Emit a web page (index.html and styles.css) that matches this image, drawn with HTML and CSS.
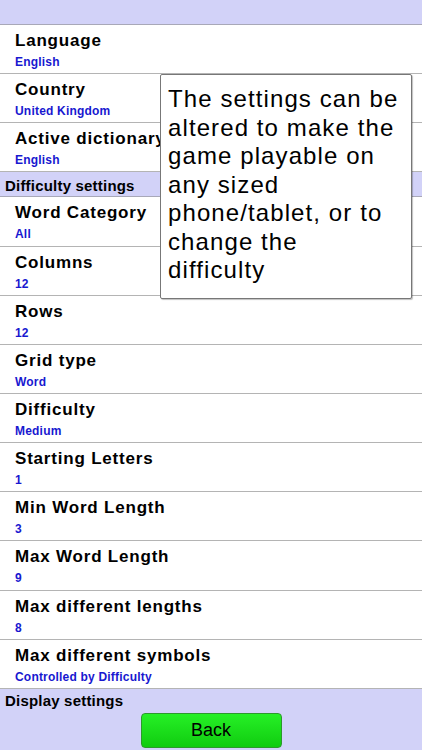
FILE: index.html
```html
<!DOCTYPE html>
<html lang="en">
    <head>
        <meta charset="UTF-8">
        <meta name="viewport" content="width=device-width, initial-scale=1.0">
        <title>Settings</title>
        <link rel="stylesheet" href="styles.css">
    </head>
    <body>
        <div class="screen">
            <div class="top-bar"></div>

            <div class="row"><div class="title">Language</div><div class="value">English</div></div>
            <div class="row"><div class="title">Country</div><div class="value">United Kingdom</div></div>
            <div class="row"><div class="title">Active dictionary</div><div class="value">English</div></div>

            <div class="section">Difficulty settings</div>

            <div class="row"><div class="title">Word Category</div><div class="value">All</div></div>
            <div class="row"><div class="title">Columns</div><div class="value">12</div></div>
            <div class="row"><div class="title">Rows</div><div class="value">12</div></div>
            <div class="row"><div class="title">Grid type</div><div class="value">Word</div></div>
            <div class="row"><div class="title">Difficulty</div><div class="value">Medium</div></div>
            <div class="row"><div class="title">Starting Letters</div><div class="value">1</div></div>
            <div class="row"><div class="title">Min Word Length</div><div class="value">3</div></div>
            <div class="row"><div class="title">Max Word Length</div><div class="value">9</div></div>
            <div class="row"><div class="title">Max different lengths</div><div class="value">8</div></div>
            <div class="row"><div class="title">Max different symbols</div><div class="value">Controlled by Difficulty</div></div>

            <div class="footer">
                <div class="footer-label">Display settings</div>
                <button class="back-btn">Back</button>
            </div>

            <div class="tip">
                The settings can be<br>
                altered to make the<br>
                game playable on<br>
                any sized<br>
                phone/tablet, or to<br>
                change the<br>
                difficulty
            </div>
        </div>
    </body>
</html>
```

FILE: styles.css
```css
body {
    margin: 0;
    font-family: "Liberation Sans", Arial, sans-serif;
    background-color: #fff;
}
.screen {
    position: relative;
    width: 422px;
    height: 750px;
    overflow: hidden;
}
.top-bar {
    height: 24px;
    background-color: #d2d2f8;
    border-bottom: 1px solid #a8a8b8;
}
.row {
    padding: 6px 0 0 15px;
    box-sizing: border-box;
    height: 49.15px;
    border-bottom: 1px solid #b4b4b4;
}
.title {
    font-size: 17px;
    font-weight: bold;
    line-height: 20px;
    letter-spacing: 0.8px;
    color: #000;
}
.value {
    margin-top: 4px;
    font-size: 12px;
    font-weight: bold;
    line-height: 15px;
    letter-spacing: 0.2px;
    color: #1818d0;
}
.section {
    height: 25px;
    box-sizing: border-box;
    padding: 3px 0 0 5px;
    background-color: #d2d2f8;
    border-bottom: 1px solid #a8a8b8;
    font-size: 15px;
    font-weight: bold;
    line-height: 22px;
    letter-spacing: 0.2px;
}
.footer {
    height: 62px;
    background-color: #d2d2f8;
    display: flex;
    flex-direction: column;
    align-items: center;
}
.footer-label {
    align-self: flex-start;
    padding: 3px 0 0 5px;
    font-size: 15px;
    font-weight: bold;
    line-height: 18px;
    letter-spacing: 0.2px;
}
.back-btn {
    margin-top: 3px;
    width: 141px;
    height: 35px;
    border: 1px solid #2c9a2c;
    border-radius: 4px;
    background: linear-gradient(#26f026, #10cc10);
    font-family: "Liberation Sans", Arial, sans-serif;
    font-size: 18px;
    color: #000;
    padding: 0;
}
.tip {
    position: absolute;
    left: 160px;
    top: 74px;
    width: 252px;
    height: 225px;
    box-sizing: border-box;
    padding: 10px 0 0 7px;
    background-color: #fff;
    border: 1px solid #777;
    border-radius: 2px;
    box-shadow: 1px 1px 1px rgba(0, 0, 0, 0.25);
    font-size: 24px;
    line-height: 28.5px;
    letter-spacing: 1.1px;
    color: #000;
}
```
